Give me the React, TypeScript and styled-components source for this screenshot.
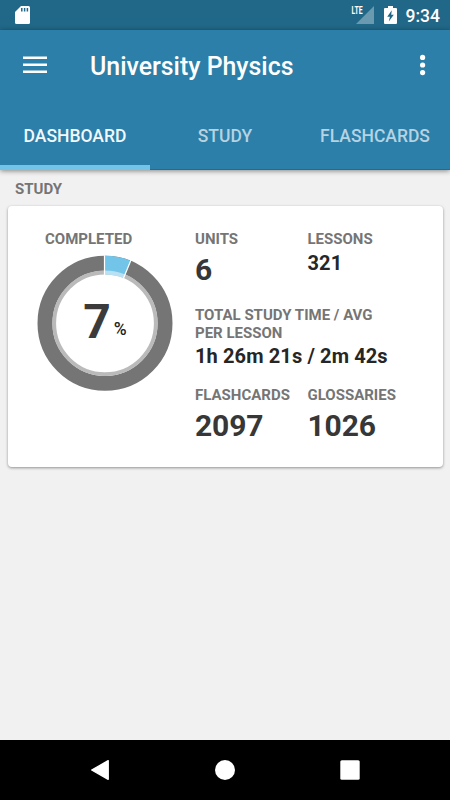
import React from "react";
import styled, { createGlobalStyle } from "styled-components";

const GlobalStyle = createGlobalStyle`
  * { box-sizing: border-box; }
  body { margin: 0; background: #f1f1f1; font-family: Roboto, "Liberation Sans", sans-serif; }
`;

const Screen = styled.div`
  display: flex;
  flex-direction: column;
  width: 450px;
  height: 800px;
  overflow: hidden;
  background: #f1f1f1;
`;

const StatusBar = styled.div`
  display: flex;
  align-items: center;
  justify-content: space-between;
  height: 30px;
  flex: none;
  padding: 0 10px 0 15px;
  background: #216787;
  color: #fff;
`;

const StatusIcons = styled.div`
  display: flex;
  align-items: center;
  height: 30px;
`;

const Clock = styled.span`
  margin-left: 9px;
  padding-top: 1px;
  font-size: 17.5px;
  font-weight: 500;
  line-height: 32px;
`;

const NetworkType = styled.span`
  align-self: flex-start;
  margin: 4px -7px 0 0;
  font-size: 11.5px;
  font-weight: 700;
  line-height: 13px;
  transform: scaleX(0.6);
  transform-origin: right;
`;

const Header = styled.header`
  flex: none;
  background: #2c7fa8;
  box-shadow: 0 1px 5px rgba(0, 0, 0, 0.45);
`;

const Toolbar = styled.div`
  display: flex;
  align-items: center;
  height: 70px;
  padding: 0 24px 0 23px;
`;

const IconButton = styled.button`
  display: flex;
  padding: 0;
  border: 0;
  background: none;
`;

const Title = styled.h1`
  flex: 1;
  margin: 3px 0 0 43px;
  color: #fff;
  font-size: 24.9px;
  font-weight: 500;
  line-height: 31px;
`;

const Tabs = styled.nav`
  display: grid;
  grid-template-columns: repeat(3, 1fr);
  height: 70px;
  box-shadow: inset 0 -1px #14709c;
`;

const Tab = styled.div<{ $active?: boolean }>`
  display: flex;
  align-items: center;
  justify-content: center;
  padding-top: 6px;
  border-bottom: 5px solid ${(p) => (p.$active ? "#72c4e9" : "transparent")};
  color: ${(p) => (p.$active ? "#f2f8fc" : "#b5d3e2")};
  font-size: 17.5px;
  font-weight: 500;
`;

const Content = styled.main`
  flex: 1;
  padding: 11px 7.5px 0;
`;

const Label = styled.div`
  color: #757575;
  font-size: 15px;
  font-weight: 700;
  line-height: 17.5px;
`;

const SectionTitle = styled(Label)`
  padding-left: 7.5px;
`;

const Card = styled.section`
  display: grid;
  grid-template-columns: 157.5px 1fr;
  height: 261px;
  margin-top: 7px;
  padding: 25.5px 30px 0;
  border-radius: 4px;
  background: #fff;
  box-shadow: 0 1px 3px rgba(0, 0, 0, 0.4);
`;

const Completion = styled.div`
  ${Label} { padding-left: 7.5px; }
`;

const Ring = styled.div`
  display: grid;
  width: 136px;
  height: 136px;
  margin: 6px 0 0 -0.5px;
  > * { grid-area: 1 / 1; }
`;

const Percent = styled.div`
  display: flex;
  align-items: flex-end;
  justify-content: center;
  align-self: center;
  padding-bottom: 1px;
  color: #3b3b3b;
  font-size: 48px;
  font-weight: 700;
  line-height: 56px;
`;

const PercentSign = styled.span`
  margin: 0 0 11px 3px;
  color: #222;
  font-size: 17.5px;
  font-weight: 500;
  line-height: 20px;
`;

const Stats = styled.div`
  display: grid;
  grid-template-columns: 112.5px 1fr;
  grid-template-rows: 76px 80px auto;
`;

const Stat = styled.div<{ $wide?: boolean }>`
  grid-column: ${(p) => (p.$wide ? "1 / -1" : "auto")};
  ${Label} { max-width: 200px; white-space: ${(p) => (p.$wide ? "normal" : "nowrap")}; }
`;

const Value = styled.div<{ $small?: boolean }>`
  margin-top: 3px;
  color: ${(p) => (p.$small ? "#262626" : "#373737")};
  font-size: ${(p) => (p.$small ? "20px" : "30px")};
  font-weight: 700;
  line-height: ${(p) => (p.$small ? "23px" : "35px")};
  letter-spacing: ${(p) => (p.$small ? "0.12px" : "-0.1px")};
  white-space: nowrap;
`;

const NavigationBar = styled.footer`
  display: flex;
  align-items: center;
  justify-content: space-between;
  flex: none;
  height: 60px;
  padding: 0 90px;
  background: #000;
`;

const stats = [
  { label: "UNITS", value: "6" },
  { label: "LESSONS", value: "321", small: true },
  { label: "TOTAL STUDY TIME / AVG PER LESSON", value: "1h 26m 21s / 2m 42s", small: true, wide: true },
  { label: "FLASHCARDS", value: "2097" },
  { label: "GLOSSARIES", value: "1026" },
];

const MemoryCardIcon = () => (
  <svg width="15" height="18" viewBox="0 0 15 18">
    <path d="M6 0h7.5Q15 0 15 1.5v15q0 1.5-1.5 1.5h-12Q0 18 0 16.5V6z" fill="#fff" />
    <path d="M6.8 2v3.5M9.6 2v3.5M12.4 2v3.5" stroke="#216787" strokeWidth="1.5" />
  </svg>
);

const SignalIcon = () => (
  <svg width="18" height="18" viewBox="0 0 18 18">
    <path d="M18 0v18H0z" fill="#6a9ab0" />
  </svg>
);

const BatteryIcon = () => (
  <svg width="13" height="18" viewBox="0 0 13 18">
    <path d="M4 0h5v2h3q1 0 1 1v14q0 1-1 1H1q-1 0-1-1V3q0-1 1-1h3z" fill="#fff" />
    <path d="M7.8 4.3 3.2 10.8h2.7L4.8 15.6l5-6.9H7.2z" fill="#216787" />
  </svg>
);

const Battery = styled.span`
  display: flex;
  margin-left: 10px;
`;

const MenuIcon = () => (
  <svg width="24" height="18" viewBox="0 0 24 18">
    <path d="M0 1.8h24M0 8.8h24M0 15.8h24" stroke="#fff" strokeWidth="2.5" />
  </svg>
);

const MoreIcon = () => (
  <svg width="6" height="22" viewBox="0 0 6 22" fill="#fff">
    <circle cx="2.6" cy="3.4" r="2.6" />
    <circle cx="2.6" cy="11" r="2.6" />
    <circle cx="2.6" cy="18.6" r="2.6" />
  </svg>
);

const DonutChart = () => (
  <svg width="136" height="136" viewBox="-68 -68.3 136 136" fill="none">
    <circle r="60" stroke="#757575" strokeWidth="15" />
    <circle r="50.8" stroke="#bababa" strokeWidth="3.8" />
    <path d="M0-60A60 60 0 0 1 22.9-55.5" stroke="#72c4e9" strokeWidth="15" />
    <path d="M0-50.8A50.8 50.8 0 0 1 19.4-47" stroke="#b8e1f4" strokeWidth="3.8" />
    <path d="M-.5-48v-20M18.3-44.5l7.8-19" stroke="#fff" strokeWidth="1.2" />
  </svg>
);

export default function App() {
  return (
    <>
      <GlobalStyle />
      <Screen>
        <StatusBar>
          <MemoryCardIcon />
          <StatusIcons>
            <NetworkType>LTE</NetworkType>
            <SignalIcon />
            <Battery><BatteryIcon /></Battery>
            <Clock>9:34</Clock>
          </StatusIcons>
        </StatusBar>
        <Header>
          <Toolbar>
            <IconButton aria-label="Menu"><MenuIcon /></IconButton>
            <Title>University Physics</Title>
            <IconButton aria-label="More options"><MoreIcon /></IconButton>
          </Toolbar>
          <Tabs>
            <Tab $active>DASHBOARD</Tab>
            <Tab>STUDY</Tab>
            <Tab>FLASHCARDS</Tab>
          </Tabs>
        </Header>
        <Content>
          <SectionTitle>STUDY</SectionTitle>
          <Card>
            <Completion>
              <Label>COMPLETED</Label>
              <Ring>
                <DonutChart />
                <Percent>7<PercentSign>%</PercentSign></Percent>
              </Ring>
            </Completion>
            <Stats>
              {stats.map((s) => (
                <Stat key={s.label} $wide={s.wide}>
                  <Label>{s.label}</Label>
                  <Value $small={s.small}>{s.value}</Value>
                </Stat>
              ))}
            </Stats>
          </Card>
        </Content>
        <NavigationBar>
          <svg width="20" height="20" viewBox="0 0 20 20">
            <path d="M18.2.7v18.6L1.7 10z" fill="#fff" stroke="#fff" strokeWidth="1.4" strokeLinejoin="round" />
          </svg>
          <svg width="20" height="20" viewBox="0 0 20 20"><circle cx="10" cy="10" r="10" fill="#fff" /></svg>
          <svg width="20" height="20" viewBox="0 0 20 20"><rect x=".3" y=".3" width="19.4" height="19.4" rx="1.5" fill="#fff" /></svg>
        </NavigationBar>
      </Screen>
    </>
  );
}
